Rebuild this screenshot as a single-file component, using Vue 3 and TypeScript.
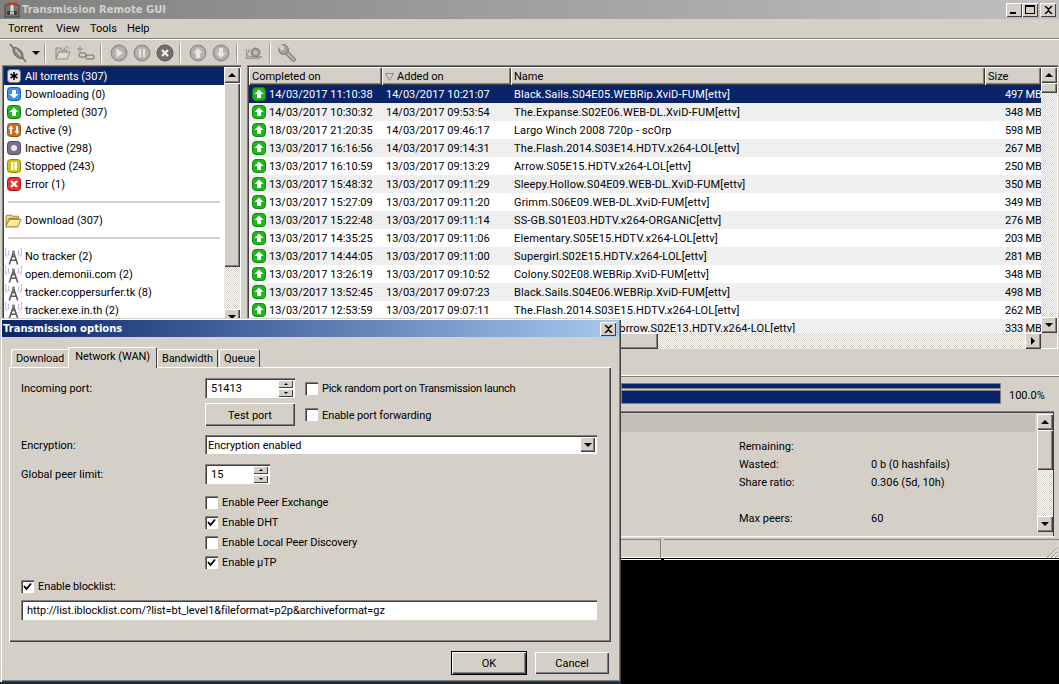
<script setup lang="ts">
interface Row { c: string; a: string; n: string; s: string }
const rows: Row[] = [
  { c: '14/03/2017 11:10:38', a: '14/03/2017 10:21:07', n: 'Black.Sails.S04E05.WEBRip.XviD-FUM[ettv]', s: '497 MB' },
  { c: '14/03/2017 10:30:32', a: '14/03/2017 09:53:54', n: 'The.Expanse.S02E06.WEB-DL.XviD-FUM[ettv]', s: '348 MB' },
  { c: '18/03/2017 21:20:35', a: '14/03/2017 09:46:17', n: 'Largo Winch 2008 720p - scOrp', s: '598 MB' },
  { c: '13/03/2017 16:16:56', a: '14/03/2017 09:14:31', n: 'The.Flash.2014.S03E14.HDTV.x264-LOL[ettv]', s: '267 MB' },
  { c: '13/03/2017 16:10:59', a: '13/03/2017 09:13:29', n: 'Arrow.S05E15.HDTV.x264-LOL[ettv]', s: '250 MB' },
  { c: '13/03/2017 15:48:32', a: '13/03/2017 09:11:29', n: 'Sleepy.Hollow.S04E09.WEB-DL.XviD-FUM[ettv]', s: '350 MB' },
  { c: '13/03/2017 15:27:09', a: '13/03/2017 09:11:20', n: 'Grimm.S06E09.WEB-DL.XviD-FUM[ettv]', s: '349 MB' },
  { c: '13/03/2017 15:22:48', a: '13/03/2017 09:11:14', n: 'SS-GB.S01E03.HDTV.x264-ORGANiC[ettv]', s: '276 MB' },
  { c: '13/03/2017 14:35:25', a: '13/03/2017 09:11:06', n: 'Elementary.S05E15.HDTV.x264-LOL[ettv]', s: '203 MB' },
  { c: '13/03/2017 14:44:05', a: '13/03/2017 09:11:00', n: 'Supergirl.S02E15.HDTV.x264-LOL[ettv]', s: '281 MB' },
  { c: '13/03/2017 13:26:19', a: '13/03/2017 09:10:52', n: 'Colony.S02E08.WEBRip.XviD-FUM[ettv]', s: '348 MB' },
  { c: '13/03/2017 13:52:45', a: '13/03/2017 09:07:23', n: 'Black.Sails.S04E06.WEBRip.XviD-FUM[ettv]', s: '498 MB' },
  { c: '13/03/2017 12:53:59', a: '13/03/2017 09:07:11', n: 'The.Flash.2014.S03E15.HDTV.x264-LOL[ettv]', s: '262 MB' },
  { c: '13/03/2017 12:40:11', a: '13/03/2017 09:06:58', n: 'DCs.Legends.of.Tomorrow.S02E13.HDTV.x264-LOL[ettv]', s: '333 MB' }
]
interface Item { t: string; icon?: string; color?: string; dark?: string; sep?: boolean }
const items: Item[] = [
  { t: 'All torrents (307)', icon: 'all', color: '#e4e4ea', dark: '#77777f' },
  { t: 'Downloading (0)', icon: 'down', color: '#3f8fee', dark: '#1558b8' },
  { t: 'Completed (307)', icon: 'up', color: '#22b822', dark: '#108010' },
  { t: 'Active (9)', icon: 'active', color: '#d0701c', dark: '#9c5008' },
  { t: 'Inactive (298)', icon: 'inactive', color: '#7a6f85', dark: '#4d4855' },
  { t: 'Stopped (243)', icon: 'pause', color: '#d2c214', dark: '#968608' },
  { t: 'Error (1)', icon: 'error', color: '#ee3030', dark: '#b01010' },
  { t: '', sep: true },
  { t: 'Download (307)', icon: 'folder' },
  { t: '', sep: true },
  { t: 'No tracker (2)', icon: 'tower' },
  { t: 'open.demonii.com (2)', icon: 'tower' },
  { t: 'tracker.coppersurfer.tk (8)', icon: 'tower' },
  { t: 'tracker.exe.in.th (2)', icon: 'tower' }
]
const menus = ['Torrent', 'View', 'Tools', 'Help']
const tabs = ['Download', 'Network (WAN)', 'Bandwidth', 'Queue']
const peerOptions = [
  { t: 'Enable Peer Exchange', on: false },
  { t: 'Enable DHT', on: true },
  { t: 'Enable Local Peer Discovery', on: false },
  { t: 'Enable µTP', on: true }
]
</script>

<template>
  <div class="desk">
    <div class="win">
      <div class="titlebar">
        <svg class="appicon" width="16" height="16" viewBox="0 0 16 16">
          <rect x="1" y="3" width="14" height="12" fill="#77756f" stroke="#44423e" />
          <rect x="3" y="0.500" width="10" height="2.500" fill="#c23a2c" />
          <rect x="6.500" y="3" width="3" height="6" fill="#e6e2d8" />
          <rect x="3" y="9" width="10" height="4" fill="#3a3a38" />
          <rect x="6" y="9.500" width="4" height="3" fill="#c9c6bd" />
        </svg>
        <span class="wintitle">Transmission Remote GUI</span>
        <div class="capbtns">
          <span class="capbtn"><i class="minglyph"></i></span>
          <span class="capbtn"><i class="maxglyph"></i></span>
          <span class="capbtn capx">
            <svg width="9" height="8" viewBox="0 0 9 8"><path d="M1 0l3.500 3.200L8 0M1 8l3.500-3.200L8 8" fill="none" stroke="#000" stroke-width="1.500" /></svg>
          </span>
        </div>
      </div>
      <div class="menubar">
        <span v-for="m in menus" :key="m" class="menu">{{ m }}</span>
      </div>
      <div class="toolbar">
        <svg width="18" height="20" viewBox="0 0 18 20" class="tb tb-plug">
          <path d="M1 1l4 5M13 14l4 5" stroke="#6e6e6a" stroke-width="1.500" fill="none" />
          <ellipse cx="9" cy="10" rx="6.500" ry="3.500" transform="rotate(50 9 10)" fill="#8e8e8a" stroke="#5e5e5a" />
          <path d="M6.500 6.500l5 6" stroke="#cfcfca" stroke-width="1.200" />
        </svg>
        <i class="tbdrop"></i>
        <i class="tbsep s1"></i>
        <svg width="16" height="16" viewBox="0 0 16 16" class="tb">
          <path d="M1 3h5l1 2h5v2H4l-3 7z" fill="#c8c6c0" stroke="#8e8c88" />
          <path d="M1 14l3-7h11l-3 7z" fill="#dbd9d3" stroke="#8e8c88" />
          <path d="M9 4l3-3 3 3" fill="none" stroke="#9c9a96" />
        </svg>
        <svg width="18" height="16" viewBox="0 0 18 16" class="tb tb-link">
          <path d="M3 1v6M0 4h6" stroke="#a8a6a0" stroke-width="2" />
          <rect x="2" y="8" width="7" height="4" rx="2" fill="none" stroke="#8e8c88" stroke-width="1.500" />
          <rect x="9" y="10" width="8" height="4" rx="2" fill="none" stroke="#8e8c88" stroke-width="1.500" />
        </svg>
        <i class="tbsep s2"></i>
        <svg width="18" height="18" viewBox="0 0 18 18" class="tb"><circle cx="9" cy="9" r="8" fill="#aaa8a4" stroke="#8a8884" /><circle cx="9" cy="9" r="6" fill="#b8b6b2" /><path d="M6.500 4.500L13 9l-6.500 4.500z" fill="#e8e6e2" /></svg>
        <svg width="18" height="18" viewBox="0 0 18 18" class="tb tb-c2"><circle cx="9" cy="9" r="8" fill="#aaa8a4" stroke="#8a8884" /><circle cx="9" cy="9" r="6" fill="#b8b6b2" /><path d="M6 5h2v8H6zM10 5h2v8h-2z" fill="#e8e6e2" /></svg>
        <svg width="18" height="18" viewBox="0 0 18 18" class="tb tb-c2"><circle cx="9" cy="9" r="8" fill="#72706c" stroke="#5c5a56" /><path d="M6 6l6 6M12 6l-6 6" stroke="#f0eeea" stroke-width="2.200" /></svg>
        <i class="tbsep s3"></i>
        <svg width="18" height="18" viewBox="0 0 18 18" class="tb"><circle cx="9" cy="9" r="8" fill="#aaa8a4" stroke="#8a8884" /><circle cx="9" cy="9" r="6" fill="#b8b6b2" /><path d="M9 4l4.500 5H11v5H7V9H4.500z" fill="#e8e6e2" /></svg>
        <svg width="18" height="18" viewBox="0 0 18 18" class="tb tb-c2"><circle cx="9" cy="9" r="8" fill="#aaa8a4" stroke="#8a8884" /><circle cx="9" cy="9" r="6" fill="#b8b6b2" /><path d="M9 14l4.500-5H11V4H7v5H4.500z" fill="#e8e6e2" /></svg>
        <i class="tbsep s4"></i>
        <svg width="18" height="14" viewBox="0 0 18 14" class="tb">
          <path d="M1 12.500h13l3-2H5C3 10 2 9 2 7z" fill="#b8b6b2" stroke="#979591" />
          <circle cx="10.500" cy="6.500" r="4.500" fill="#9c9a96" stroke="#7e7c78" />
          <circle cx="10.500" cy="6.500" r="2" fill="#c4c2be" />
          <path d="M2 7L1 3M3.500 7L4 3" stroke="#8e8c88" />
        </svg>
        <i class="tbsep s4"></i>
        <svg width="18" height="18" viewBox="0 0 18 18" class="tb">
          <path d="M7 7l8.500 8.500" stroke="#6e6c68" stroke-width="4.500" stroke-linecap="round" />
          <path d="M7 7l8.500 8.500" stroke="#b4b2ae" stroke-width="2.800" stroke-linecap="round" />
          <circle cx="5.500" cy="5.500" r="4.800" fill="#a8a6a2" stroke="#6e6c68" />
          <path d="M0 0l6 2 0 4-4 0z" fill="#d4d0c8" />
        </svg>
      </div>

      <div class="panes">
        <div class="leftpane sunken">
          <div class="filterlist">
            <template v-for="(it, i) in items" :key="i">
              <div v-if="it.sep" class="filtersep"><i></i></div>
              <div v-else class="filter" :class="{ sel: i === 0 }">
                <svg v-if="it.icon === 'folder'" class="ficon wide" width="16" height="16" viewBox="0 0 16 16">
                  <path d="M1 13V4l1-1h4l1 1h5l1 1v1H4z" fill="#f3d988" stroke="#a88a2e" />
                  <path d="M1 13l3-6h11l-3 7H1z" fill="#fbe9a8" stroke="#b0923a" />
                </svg>
                <svg v-else-if="it.icon === 'tower'" class="ficon wide" width="16" height="16" viewBox="0 0 16 16">
                  <path d="M1 0c-1.500 3-1 6 1 8M15 0c1.500 3 1 6-1 8M3.500 2c-1 2-.5 3.500.5 5M12.500 2c1 2 .5 3.500-.5 5" stroke="#bcaae6" fill="none" />
                  <path d="M8 4L4 15.500M8 4l4 11.500M5.500 11.500h5M6.800 8h2.400" stroke="#5c5c5c" stroke-width="1.500" fill="none" />
                  <circle cx="8" cy="3.500" r="1.500" fill="#8c8c8c" />
                </svg>
                <svg v-else class="ficon" width="14" height="14" viewBox="0 0 14 14">
                  <rect x="0.500" y="0.500" width="13" height="13" rx="3" :fill="it.color" :stroke="it.dark" />
                  <path v-if="it.icon === 'up'" d="M7 2.500L11.500 7H9v4H5V7H2.500z" fill="#fff" />
                  <path v-else-if="it.icon === 'down'" d="M7 11.500L11.500 7H9V3H5v4H2.500z" fill="#fff" />
                  <path v-else-if="it.icon === 'all'" d="M7 3v8M3.500 5l7 4M10.500 5l-7 4" stroke="#000" stroke-width="1.500" />
                  <path v-else-if="it.icon === 'active'" d="M4 2.500L6.500 6H5v5H3V6H1.500zM10 11.500L7.500 8H9V3h2v5h1.500z" fill="#fff" />
                  <circle v-else-if="it.icon === 'inactive'" cx="7" cy="7" r="3" fill="#e8e6ee" />
                  <path v-else-if="it.icon === 'pause'" d="M4 3h2.500v8H4zM7.500 3H10v8H7.500z" fill="#fff" />
                  <path v-else-if="it.icon === 'error'" d="M4 4l6 6M10 4l-6 6" stroke="#fff" stroke-width="2.400" />
                </svg>
                <span class="ftext">{{ it.t }}</span>
              </div>
            </template>
          </div>
          <div class="vscroll left-v">
            <span class="sbtn"><i class="tri up"></i></span>
            <span class="thumb left-thumb"></span>
            <span class="track"></span>
            <span class="sbtn"><i class="tri down"></i></span>
          </div>
        </div>

        <div class="tablepane sunken">
          <div class="tablemain">
            <div class="thead">
              <span class="th c1">Completed on</span>
              <span class="th c2"><svg width="9" height="8" viewBox="0 0 9 8"><path d="M0.500 0.500h8L4.500 7.500z" fill="none" stroke="#8a8880" /></svg>Added on</span>
              <span class="th c3">Name</span>
              <span class="th c4">Size</span>
            </div>
            <div class="tbody">
              <div v-for="(r, i) in rows" :key="i" class="tr" :class="{ sel: i === 0, odd: i % 2 === 1 }">
                <span class="td c1">
                  <svg width="14" height="14" viewBox="0 0 14 14" class="rowicon">
                    <rect x="0.500" y="0.500" width="13" height="13" rx="3.500" fill="#22b422" stroke="#128a12" />
                    <path d="M7 2.500L11.500 7H9v4H5V7H2.500z" fill="#fff" />
                  </svg>{{ r.c }}
                </span>
                <span class="td c2">{{ r.a }}</span>
                <span class="td c3">{{ r.n }}</span>
                <span class="td c4">{{ r.s }}</span>
              </div>
            </div>
            <div class="hscroll">
              <span class="hthumb"></span>
              <span class="track"></span>
              <span class="sbtn"><i class="tri right"></i></span>
            </div>
          </div>
          <div class="rightcol">
            <div class="vscroll table-v">
              <span class="sbtn"><i class="tri up"></i></span>
              <span class="thumb small-thumb"></span>
              <span class="track"></span>
              <span class="sbtn"><i class="tri down"></i></span>
            </div>
          </div>
        </div>
      </div>

      <div class="tabstrip"></div>
      <div class="progressarea">
        <div class="bars">
          <i class="bar thin"></i>
          <i class="bar thick"></i>
        </div>
        <span class="pct">100.0%</span>
      </div>
      <div class="details">
        <div class="detailmain">
          <div class="detailhead"></div>
          <div class="detailgrid">
            <span>Remaining:</span><span></span>
            <span>Wasted:</span><span>0 b (0 hashfails)</span>
            <span>Share ratio:</span><span>0.306 (5d, 10h)</span>
            <span></span><span></span>
            <span>Max peers:</span><span>60</span>
          </div>
        </div>
        <div class="vscroll detail-v">
          <span class="sbtn"><i class="tri up"></i></span>
          <span class="thumb detail-thumb"></span>
          <span class="track"></span>
          <span class="sbtn"><i class="tri down"></i></span>
        </div>
      </div>
      <div class="statusbar">
        <span class="cell c-a"></span>
        <span class="cell c-b"></span>
        <svg class="grip" width="13" height="13" viewBox="0 0 13 13"><path d="M12 2L2 12M12 6l-6 6M12 10l-2 2" stroke="#8a8880" fill="none" /><path d="M12 3L3 12M12 7l-5 5M12 11l-1 1" stroke="#fff" fill="none" /></svg>
      </div>
    </div>

    <div class="dialog">
      <div class="dlgtitle">
        <span>Transmission options</span>
        <span class="capbtn dlgclose">
          <svg width="9" height="8" viewBox="0 0 9 8"><path d="M1 0l3.500 3.200L8 0M1 8l3.500-3.200L8 8" fill="none" stroke="#000" stroke-width="1.500" /></svg>
        </span>
      </div>
      <div class="dlgbody">
        <div class="tabs">
          <span v-for="(t, i) in tabs" :key="t" class="tab" :class="{ active: i === 1 }">{{ t }}</span>
        </div>
        <div class="tabpanel">
          <div class="frow r-port">
            <span class="flabel">Incoming port:</span>
            <span class="spin w90"><b>51413</b><span class="spinbtns"><i><u class="tiny up"></u></i><i><u class="tiny down"></u></i></span></span>
            <label class="chk ml narrow"><i class="box"></i>Pick random port on Transmission launch</label>
          </div>
          <div class="frow r-test">
            <span class="flabel"></span>
            <span class="btn w90">Test port</span>
            <label class="chk ml"><i class="box"></i>Enable port forwarding</label>
          </div>
          <div class="frow r-enc">
            <span class="flabel">Encryption:</span>
            <span class="combo"><b>Encryption enabled</b><span class="sbtn combobtn"><i class="tri down"></i></span></span>
          </div>
          <div class="frow r-peer">
            <span class="flabel">Global peer limit:</span>
            <span class="spin w65"><b>15</b><span class="spinbtns"><i><u class="tiny up"></u></i><i><u class="tiny down"></u></i></span></span>
          </div>
          <div class="optlist">
            <label v-for="o in peerOptions" :key="o.t" class="chk">
              <i class="box">
                <svg v-if="o.on" width="9" height="9" viewBox="0 0 9 9"><path d="M1 4l2.500 3L8 1.500" fill="none" stroke="#000" stroke-width="1.800" /></svg>
              </i>{{ o.t }}
            </label>
          </div>
          <label class="chk r-block">
            <i class="box"><svg width="9" height="9" viewBox="0 0 9 9"><path d="M1 4l2.500 3L8 1.500" fill="none" stroke="#000" stroke-width="1.800" /></svg></i>Enable blocklist:
          </label>
          <div class="urlbox">http://list.iblocklist.com/?list=bt_level1&amp;fileformat=p2p&amp;archiveformat=gz</div>
        </div>
        <div class="dlgbtns">
          <span class="btn dbtn default">OK</span>
          <span class="btn dbtn">Cancel</span>
        </div>
      </div>
    </div>
  </div>
</template>

<style>
html, body { margin: 0; padding: 0; background: #000; }
</style>

<style scoped>
.desk {
  position: relative;
  width: 1059px;
  height: 684px;
  overflow: hidden;
  background: #000;
  font: 11px/14px Roboto, "Liberation Sans", sans-serif;
  color: #000;
}
.win {
  height: 558px;
  background: #d4d0c8;
  display: flex;
  flex-direction: column;
  border-bottom: 1px solid #fff;
  box-sizing: border-box;
}
.titlebar {
  height: 19px;
  flex: none;
  display: flex;
  align-items: center;
  background: linear-gradient(90deg, #808080, #c0c0c0);
  padding-left: 4px;
  box-sizing: border-box;
}
.appicon { margin-right: 2px; }
.wintitle { font-weight: 700; color: #d4d0c8; font-family: "DejaVu Sans", sans-serif; font-size: 10px; }
.capbtns { margin-left: auto; margin-right: 3px; display: flex; }
.capbtn {
  width: 16px;
  height: 14px;
  background: #d4d0c8;
  box-shadow: inset 1px 1px #fff, inset -1px -1px #404040;
  display: flex;
  align-items: center;
  justify-content: center;
}
.capx { margin-left: 2px; }
.minglyph { width: 6px; height: 2px; background: #000; margin-top: 7px; margin-right: 2px; }
.maxglyph { width: 8px; height: 6px; border: 1px solid #000; border-top-width: 2px; }
.menubar {
  height: 20px;
  flex: none;
  display: flex;
  align-items: center;
  padding-left: 2px;
  box-sizing: border-box;
  border-bottom: 1px solid #808080;
  box-shadow: 0 1px #fff;
}
.menu { padding: 0 6px; }
.menu:nth-child(1) { width: 38px; margin-right: -2px; }
.menu:nth-child(2) { width: 22px; }
.menu:nth-child(3) { width: 25px; }
.toolbar {
  height: 25px;
  flex: none;
  display: flex;
  align-items: center;
  padding-left: 9px;
  margin-top: 1px;
  box-sizing: border-box;
}
.tb { flex: none; }
.tbdrop { width: 0; height: 0; border: 4px solid transparent; border-top-color: #000; border-bottom: 0; margin-left: 5px; }
.tbsep { width: 1px; height: 20px; background: #a09c94; box-shadow: 1px 0 #fff; flex: none; }
.s1 { margin: 0 10px 0 4px; }
.s2 { margin: 0 9px 0 5px; }
.s3 { margin: 0 9px 0 5px; }
.s4 { margin: 0 8px 0 6px; }
.tb-link { margin-left: 6px; }
.tb-c2 { margin-left: 5px; }
.panes {
  height: 284px;
  flex: none;
  display: flex;
  padding: 0 2px;
  box-sizing: border-box;
}
.sunken { box-shadow: inset 1px 1px #808080, inset 2px 2px #404040, inset -1px -1px #fff; box-sizing: border-box; }
.leftpane {
  width: 239px;
  height: 284px;
  display: flex;
  padding: 2px 1px 0 2px;
  background: #fff;
  flex: none;
}
.filterlist { width: 220px; flex: none; overflow: hidden; background: #fff; }
.filter { height: 18px; display: flex; align-items: center; white-space: nowrap; }
.filter.sel { background: #0a246a; color: #fff; }
.ftext { padding-top: 2px; }
.ficon { flex: none; width: 14px; height: 14px; margin: 0 4px 0 3px; }
.ficon.wide { width: 17px; height: 17px; margin: 0 3px 0 1px; }
.filtersep { height: 18px; display: flex; align-items: center; justify-content: center; }
.filtersep i { display: block; width: 212px; height: 2px; background: #d4d0c8; }
.vscroll { display: flex; flex-direction: column; width: 16px; flex: none; }
.left-v { height: 258px; background: #fff; }
.sbtn {
  flex: none;
  width: 16px;
  height: 16px;
  background: #d4d0c8;
  box-shadow: inset 1px 1px #fff, inset -1px -1px #404040, inset -2px -2px #808080;
  display: flex;
  align-items: center;
  justify-content: center;
  box-sizing: border-box;
}
.thumb {
  flex: none;
  background: #d4d0c8;
  box-shadow: inset 1px 1px #fff, inset -1px -1px #404040, inset -2px -2px #808080;
}
.left-thumb { height: 184px; }
.small-thumb { height: 10px; }
.detail-thumb { height: 40px; }
.track {
  flex: 1;
  background-color: #fff;
  background-image: conic-gradient(#d4d0c8 25%, #fff 0 50%, #d4d0c8 0 75%, #fff 0);
  background-size: 2px 2px;
}
.tri { width: 0; height: 0; display: block; border: 4px solid transparent; }
.tri.up { border-bottom-color: #000; border-top: 0; }
.tri.down { border-top-color: #000; border-bottom: 0; }
.tri.right { border-left-color: #000; border-right: 0; }
.tablepane {
  width: 811px;
  margin-left: 6px;
  height: 284px;
  display: flex;
  padding: 2px 1px 0 2px;
  background: #d4d0c8;
  flex: none;
}
.tablemain { width: 792px; flex: none; display: flex; flex-direction: column; background: #fff; }
.rightcol { width: 16px; flex: none; }
.table-v { height: 266px; }
.thead { display: flex; height: 18px; flex: none; background: #d4d0c8; }
.th {
  height: 18px;
  display: flex;
  align-items: center;
  gap: 3px;
  box-sizing: border-box;
  padding: 2px 0 0 3px;
  box-shadow: inset 1px 1px #fff, inset -1px -1px #404040, inset -2px -2px #808080;
}
.c1 { width: 133px; }
.c2 { width: 129px; }
.c3 { width: 474px; }
.c4 { width: 56px; }
.tbody { height: 248px; overflow: hidden; flex: none; }
.tr { display: flex; height: 18px; background: #fff; align-items: center; white-space: nowrap; }
.tr.odd { background: #efefef; }
.tr.sel { background: #0a246a; color: #fff; }
.td { display: flex; align-items: center; box-sizing: border-box; padding: 2px 0 0 3px; overflow: hidden; }
.rowicon { flex: none; margin: -2px 3px 0 0; }
.td.c2 { padding-left: 4px; }
.td.c3 { letter-spacing: 0.15px; }
.td.c4 { padding-left: 20px; letter-spacing: -0.2px; }
.hscroll { display: flex; height: 16px; flex: none; }
.hthumb {
  width: 409px;
  flex: none;
  background: #d4d0c8;
  box-shadow: inset 1px 1px #fff, inset -1px -1px #404040, inset -2px -2px #808080;
}
.tabstrip { height: 27px; flex: none; border-bottom: 1px solid #fff; box-shadow: 0 1px #808080; box-sizing: border-box; }
.progressarea { height: 35px; flex: none; display: flex; padding: 7px 0 0 621px; box-sizing: border-box; }
.bars { width: 380px; display: flex; flex-direction: column; gap: 2px; flex: none; }
.bar { display: block; background: #0a246a; box-shadow: 0 0 0 1px #808080; margin: 1px 1px 0 1px; }
.bar.thin { height: 4px; }
.bar.thick { height: 12px; }
.pct { margin-left: 8px; margin-top: 6px; }
.details {
  height: 125px;
  flex: none;
  display: flex;
  margin: 0 5px 0 0;
  padding: 2px 1px 2px 620px;
  box-sizing: border-box;
  box-shadow: inset 0 1px #808080, inset 0 2px #404040, inset -1px 0 #404040, 0 1px #fff;
}
.detailmain { flex: 1; }
.detailhead { height: 18px; background: #c4c0b8; margin-right: 2px; margin-top: 1px; }
.detailgrid {
  display: grid;
  grid-template-columns: 132px 1fr;
  grid-auto-rows: 18px;
  padding: 6px 0 0 119px;
  align-items: center;
}
.detail-v { height: 118px; margin-top: 1px; }
.statusbar {
  height: 21px;
  flex: none;
  margin-top: 3px;
  display: flex;
  position: relative;
}
.cell { display: block; box-sizing: border-box; box-shadow: inset -1px 0 #808080; border-top: 1px solid #808080; border-bottom: 1px solid #fff; }
.c-a { width: 661px; }
.c-b { flex: 1; margin-left: 3px; box-shadow: none; }
.grip { position: absolute; right: 1px; bottom: 1px; }

/* floating dialog window */
.dialog {
  position: absolute;
  left: 0;
  top: 318px;
  width: 621px;
  height: 364px;
  background: #d4d0c8;
  box-shadow: inset 1px 1px #d4d0c8, inset 2px 2px #fff, inset -1px -1px #404040, inset -2px -2px #808080, 0 2px #1a2a38;
  padding: 2px;
  box-sizing: border-box;
  display: flex;
  flex-direction: column;
}
.dlgtitle {
  height: 17px;
  flex: none;
  display: flex;
  align-items: center;
  justify-content: space-between;
  padding: 0 2px 0 1px;
  color: #fff;
  font-weight: 700;
  font-family: "DejaVu Sans", sans-serif;
  font-size: 10px;
  background: linear-gradient(90deg, #0a246a, #a6caf0);
}
.dlgclose { margin-right: 1px; height: 14px; }
.dlgbody { flex: 1; padding: 9px 8px 0 7px; display: flex; flex-direction: column; }
.tabs { display: flex; height: 21px; flex: none; padding-left: 2px; align-items: flex-end; position: relative; z-index: 1; letter-spacing: -0.1px; }
.tab {
  height: 18px;
  padding: 2px 5px 0;
  box-sizing: border-box;
  display: flex;
  align-items: center;
  box-shadow: inset 1px 1px #fff, inset -1px 0 #404040;
  border-radius: 2px 2px 0 0;
}
.tab.active { height: 21px; padding: 0 7px 1px; margin: 0 -1px -1px -1px; background: #d4d0c8; position: relative; z-index: 1; }
.tab:nth-child(3), .tab:nth-child(4) { margin-left: 1px; }
.tabpanel {
  height: 275px;
  flex: none;
  box-sizing: border-box;
  padding: 0 12px;
  box-shadow: inset 1px 1px #fff, inset -1px -1px #404040, inset -2px -2px #808080;
}
.frow { display: flex; align-items: center; }
.flabel { width: 184px; flex: none; padding-top: 2px; }
.r-port { padding-top: 11px; height: 20px; box-sizing: content-box; }
.r-test { margin-top: 5px; height: 23px; }
.r-enc { margin-top: 9px; height: 19px; }
.r-peer { margin-top: 10px; height: 20px; }
.spin, .combo, .urlbox {
  background: #fff;
  box-shadow: inset 1px 1px #808080, inset 2px 2px #404040, inset -1px -1px #fff;
  box-sizing: border-box;
  display: flex;
  align-items: center;
  flex: none;
}
.spin b, .combo b { font-weight: 400; padding-top: 2px; }
.spin { height: 20px; padding-left: 6px; justify-content: space-between; }
.w90 { width: 90px; }
.w65 { width: 65px; }
.spinbtns { display: flex; flex-direction: column; gap: 1px; margin-right: 2px; }
.spinbtns i {
  width: 15px;
  height: 8px;
  display: flex;
  align-items: center;
  justify-content: center;
  background: #d4d0c8;
  box-shadow: inset 1px 1px #fff, inset -1px -1px #404040;
}
.tiny { display: block; width: 0; height: 0; border: 2px solid transparent; }
.tiny.up { border-bottom-color: #000; border-top: 0; }
.tiny.down { border-top-color: #000; border-bottom: 0; }
.btn {
  height: 23px;
  display: flex;
  align-items: center;
  justify-content: center;
  background: #d4d0c8;
  box-sizing: border-box;
  flex: none;
  padding-top: 2px;
  box-shadow: inset 1px 1px #fff, inset -1px -1px #404040, inset -2px -2px #808080;
}
.chk { display: flex; align-items: center; height: 20px; padding-top: 2px; box-sizing: border-box; letter-spacing: -0.1px; }
.narrow { letter-spacing: -0.25px; }
.ml { margin-left: 10px; }
.box {
  width: 13px;
  height: 13px;
  flex: none;
  margin: -2px 4px 0 0;
  background: #fff;
  box-sizing: border-box;
  box-shadow: inset 1px 1px #808080, inset 2px 2px #404040, inset -1px -1px #fff;
  display: flex;
  align-items: center;
  justify-content: center;
}
.combo { height: 19px; padding-left: 3px; justify-content: space-between; width: 392px; }
.combobtn { width: 15px; height: 15px; margin-right: 2px; padding: 0; }
.optlist { display: flex; flex-direction: column; padding-left: 184px; margin-top: 8px; }
.r-block { margin-top: 4px; }
.urlbox { height: 20px; padding: 2px 0 0 6px; width: 576px; margin-top: 4px; letter-spacing: -0.05px; }
.dlgbtns { display: flex; justify-content: flex-end; gap: 9px; padding: 10px 2px 0 0; }
.dbtn { width: 74px; height: 22px; }
.default { box-shadow: 0 0 0 1px #000, inset 1px 1px #fff, inset -1px -1px #404040, inset -2px -2px #808080; }
</style>
